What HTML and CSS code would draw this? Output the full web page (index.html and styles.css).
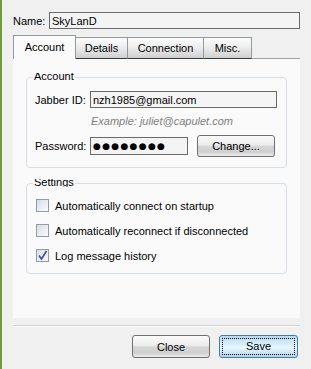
FILE: index.html
```html
<!DOCTYPE html>
<html lang="en">
<head>
    <meta charset="UTF-8">
    <title>Account Settings</title>
    <link rel="stylesheet" href="styles.css">
</head>
<body>
    <div class="window">
        <div class="name-row">
            <label for="name">Name:</label>
            <input type="text" id="name" class="field" value="SkyLanD">
        </div>

        <div class="tabs">
            <div class="tab active tab-account">Account</div>
            <div class="tab tab-details">Details</div>
            <div class="tab tab-connection">Connection</div>
            <div class="tab tab-misc">Misc.</div>
        </div>

        <div class="panel">
            <div class="group group-account">
                <span class="group-title"><span>Account</span></span>
                <div class="row">
                    <label for="jid">Jabber ID:</label>
                    <input type="text" id="jid" class="field jid" value="nzh1985@gmail.com">
                </div>
                <p class="hint">Example: juliet@capulet.com</p>
                <div class="row row-password">
                    <label>Password:</label>
                    <div class="field password">●●●●●●●●</div>
                    <button class="btn change">Change...</button>
                </div>
            </div>

            <div class="group group-settings">
                <span class="group-title"><span>Settings</span></span>
                <label class="check"><span class="box"></span>Automatically connect on startup</label>
                <label class="check"><span class="box"></span>Automatically reconnect if disconnected</label>
                <label class="check"><span class="box checked">
                    <svg width="11" height="11" viewBox="0 0 11 11"><path d="M2 5.5 L4.5 9 L9.5 1" fill="none" stroke="#4848a8" stroke-width="1.6"/></svg>
                </span>Log message history</label>
            </div>
        </div>

        <div class="separator"></div>

        <div class="buttons">
            <button class="btn close">Close</button>
            <button class="btn save"><span class="focus">Save</span></button>
        </div>
    </div>
</body>
</html>
```

FILE: styles.css
```css
body {
    margin: 0;
    background: #f0f0f0;
    font-family: "Liberation Sans", Arial, sans-serif;
    font-size: 11px;
    color: #000;
}

.window {
    width: 311px;
    height: 369px;
    box-sizing: border-box;
    border-left: 2px solid #6f9d40;
    padding: 12px 11px 0 11px;
}

.field {
    box-sizing: border-box;
    height: 17px;
    margin: 0;
    border: 1px solid #6a6a6a;
    background: #f4f4f4;
    padding: 0 2px;
    font: inherit;
    color: #000;
    outline: none;
}

.name-row {
    display: flex;
    align-items: center;
    height: 17px;
}

.name-row label {
    flex: none;
    width: 36px;
}

.name-row .field {
    flex: 1;
    min-width: 0;
}

/* tabs */
.tabs {
    display: flex;
    align-items: flex-end;
    margin-top: 6px;
    height: 24px;
    margin-bottom: -1px;
    position: relative;
    z-index: 1;
}

.tab {
    box-sizing: border-box;
    flex: none;
    height: 22px;
    border: 1px solid #919b9c;
    border-left: none;
    border-bottom: 1px solid #3a3a3a;
    background: linear-gradient(#fdfdfd, #ebebeb 50%, #d0d0d0);
    text-align: center;
    line-height: 20px;
}

.tab.active {
    height: 24px;
    border-left: 1px solid #919b9c;
    border-bottom: none;
    background: #fafafa;
    line-height: 22px;
}

.tab-account { width: 63px; }
.tab-details { width: 52px; }
.tab-connection { width: 76px; }
.tab-misc { width: 48px; }

.panel {
    box-sizing: border-box;
    height: 260px;
    background: #fafafa;
    border-top: 1px solid #a0a0a0;
    padding: 18px 13px 0 13px;
}

/* group boxes */
.group {
    position: relative;
    box-sizing: border-box;
    border: 1px solid #d6dfe6;
    border-radius: 4px;
}

.group-title {
    position: absolute;
    left: 6px;
    top: -5px;
    height: 8px;
    overflow: hidden;
    padding: 0 1px;
    background: #fafafa;
}

.group-title span {
    display: block;
    line-height: 13px;
    margin-top: -3px;
}

.group-account {
    height: 91px;
    padding: 13px 9px 0 8px;
}

.row {
    display: flex;
    align-items: center;
}

.row label {
    flex: none;
    width: 55px;
}

.jid {
    flex: none;
    width: 187px;
}

.hint {
    margin: 6px 0 0 56px;
    height: 14px;
    line-height: 14px;
    color: #808080;
    font-style: italic;
}

.row-password {
    margin-top: 7px;
    height: 22px;
}

.password {
    flex: none;
    width: 98px;
    height: 18px;
    font-family: "DejaVu Sans", sans-serif;
    font-size: 9px;
    line-height: 16px;
    letter-spacing: 1.3px;
}

.btn {
    box-sizing: border-box;
    flex: none;
    height: 23px;
    width: 78px;
    margin: 0;
    padding: 0;
    border: 1px solid #707070;
    border-radius: 3px;
    background: linear-gradient(#fbfbfb, #ececec 45%, #d6d6d6 52%, #cfcfcf 80%, #ececec);
    font: inherit;
    color: #000;
}

.change {
    height: 22px;
    margin-left: 9px;
}

.group-settings {
    margin-top: 15px;
    height: 91px;
    padding: 15px 9px 0 9px;
}

.check {
    display: flex;
    align-items: center;
    height: 13px;
    margin-bottom: 12px;
}

.box {
    box-sizing: border-box;
    flex: none;
    width: 13px;
    height: 13px;
    margin-right: 6px;
    border: 1px solid #8f9cb0;
    background: linear-gradient(135deg, #d8dde6, #fafbfc);
    display: flex;
    align-items: center;
    justify-content: center;
}

/* footer */
.separator {
    margin-top: 7px;
    border-top: 1px solid #d2d2d2;
    border-bottom: 1px solid #fdfdfd;
}

.buttons {
    display: flex;
    justify-content: flex-end;
    gap: 9px;
    margin-top: 8px;
    padding-right: 2px;
}

.save {
    width: 79px;
    border-color: #3c7fb1;
    padding: 2px;
    background: linear-gradient(#b2dcf4, #dcf1fc 45%, #eaf8fe 55%, #a8d5f0);
}

.save .focus {
    display: block;
    height: 100%;
    box-sizing: border-box;
    border: 1px dotted #000;
    line-height: 15px;
}
```
